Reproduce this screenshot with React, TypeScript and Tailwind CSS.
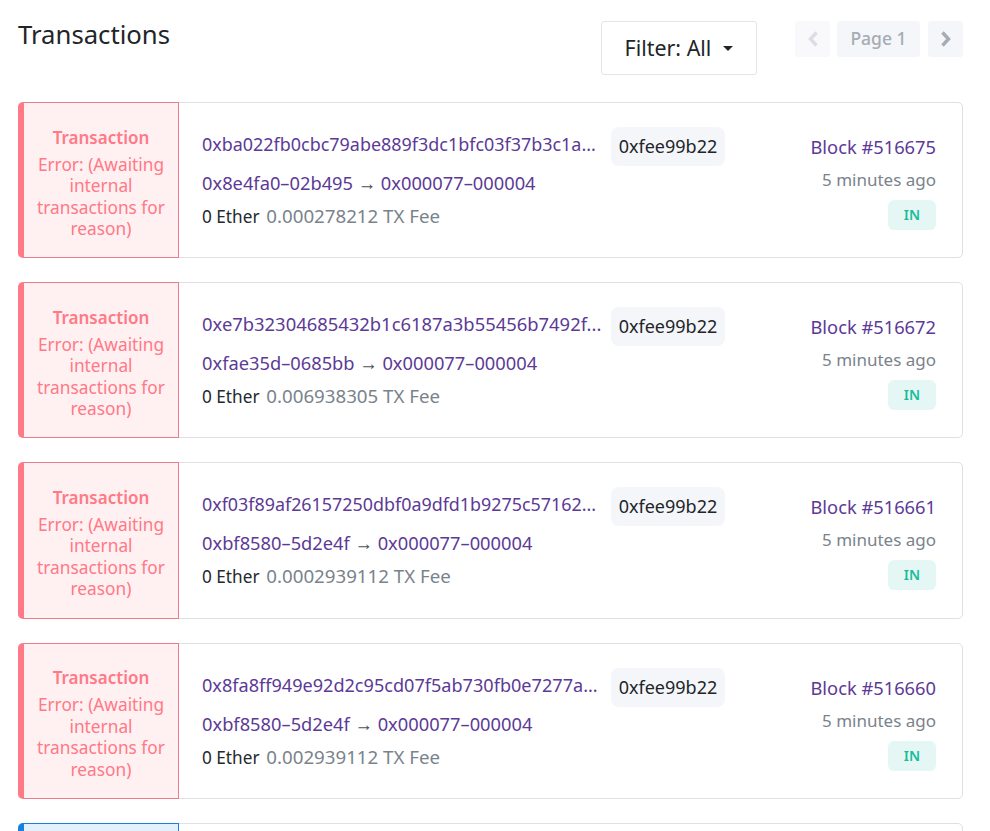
import React from "react";

const rows = [
  { hash: "0xba022fb0cbc79abe889f3dc1bfc03f37b3c1a...", size: "text-[17.95px]", from: "0x8e4fa0–02b495", fee: "0.000278212", block: "516675" },
  { hash: "0xe7b32304685432b1c6187a3b55456b7492f...", size: "text-[18.4px]", from: "0xfae35d–0685bb", fee: "0.006938305", block: "516672" },
  { hash: "0xf03f89af26157250dbf0a9dfd1b9275c57162...", size: "text-[17.9px]", from: "0xbf8580–5d2e4f", fee: "0.0002939112", block: "516661" },
  { hash: "0x8fa8ff949e92d2c95cd07f5ab730fb0e7277a...", size: "text-[18.1px]", from: "0xbf8580–5d2e4f", fee: "0.002939112", block: "516660" },
];

function Row({ hash, size, from, fee, block }: (typeof rows)[number]) {
  return (
    <div className="flex h-[156.2px] rounded-[5px] border border-[#dee0e3] mb-[24px]">
      <div className="-my-px -ml-px w-[161px] shrink-0 flex flex-col items-center justify-center rounded-l-[5px] border border-l-[6px] border-[#ec7c8b] border-l-[#ff7986] bg-[#fff0f2] px-3 pt-[5px] text-center text-[#ff7986] text-[17.3px] leading-[21.5px]">
        <div className="font-semibold text-[17px] leading-[24px] mb-[4px]">Transaction</div>
        <div>Error: (Awaiting internal transactions for reason)</div>
      </div>
      <div className="flex flex-1 min-w-0 pl-[23px] pr-[26px] pt-[24px]">
        <div className="w-[402px] shrink-0 min-w-0 pt-[5px] leading-[24px]">
          <div className={`whitespace-nowrap ${size} text-[#5c3a96]`}>{hash}</div>
          <div className="mt-[15px] whitespace-nowrap text-[18.3px] text-[#5c3a96]">
            {from} <span className="text-[#4a4f55]">→</span> 0x000077–000004
          </div>
          <div className="mt-[9px] whitespace-nowrap text-[18.7px] text-[#7a838b]">
            <span className="mr-[2px] text-[17.2px] text-[#24292e]">0 Ether</span> {fee} TX Fee
          </div>
        </div>
        <div className="ml-[7px] h-[39px] w-[114px] shrink-0 flex items-center justify-center rounded-[8px] bg-[#f5f6f9] text-[18px] text-[#212529]">
          0xfee99b22
        </div>
        <div className="flex-1 flex flex-col items-end text-[17px] leading-[24px]">
          <div className="mt-[8px] text-[18.3px] text-[#5c3a96] whitespace-nowrap">Block #{block}</div>
          <div className="mt-[9px] text-[#7a838b] whitespace-nowrap">5 minutes ago</div>
          <div className="mt-[8px] flex h-[30px] w-[48px] items-center justify-center rounded-[6px] bg-[#e5f7f4] text-[14px] font-semibold text-[#1abc9c]">IN</div>
        </div>
      </div>
    </div>
  );
}

export default function App() {
  return (
    <div className="h-[831px] overflow-hidden bg-white pl-[18px] pr-[27px] font-['Noto_Sans',sans-serif]">
      <div className="flex h-[102px] items-start">
        <h1 className="mt-[18px] text-[25.7px] leading-[34px] font-normal text-[#212529]">Transactions</h1>
        <div className="ml-auto mt-[21px] flex h-[54px] w-[156px] items-center justify-center gap-[12px] rounded-[3px] border border-[#e3e5e8] text-[21.4px] text-[#212529]">
          Filter: All
          <span className="mt-[1px] h-0 w-0 border-x-[5px] border-t-[5px] border-x-transparent border-t-[#212529]" />
        </div>
        <div className="ml-[38px] mt-[21px] flex gap-[7px]">
          <div className="flex h-[36px] w-[35px] items-center justify-center rounded-[3px] bg-[#f9f9fb]">
            <svg width="12" height="18" viewBox="0 0 12 18" fill="none"><path d="M9.5 2.5 3.5 9l6 6.5" stroke="#dcdee3" strokeWidth="3.4" /></svg>
          </div>
          <div className="flex h-[36px] w-[83px] items-center justify-center rounded-[3px] bg-[#f5f6f9] pb-[2px] text-[17.5px] font-medium text-[#a6abb5]">Page 1</div>
          <div className="ml-[1px] flex h-[36px] w-[35px] items-center justify-center rounded-[3px] bg-[#f5f6f9]">
            <svg width="12" height="18" viewBox="0 0 12 18" fill="none"><path d="M2.5 2.5 8.5 9l-6 6.5" stroke="#a6abb5" strokeWidth="3.4" /></svg>
          </div>
        </div>
      </div>
      {rows.map((r) => (
        <Row key={r.block} {...r} />
      ))}
      <div className="flex h-[156px] rounded-[5px] border border-[#dee0e3]">
        <div className="-my-px -ml-px w-[161px] shrink-0 rounded-l-[5px] border border-l-[6px] border-[#1b7fe0] bg-[#e3f1fd]" />
      </div>
    </div>
  );
}
